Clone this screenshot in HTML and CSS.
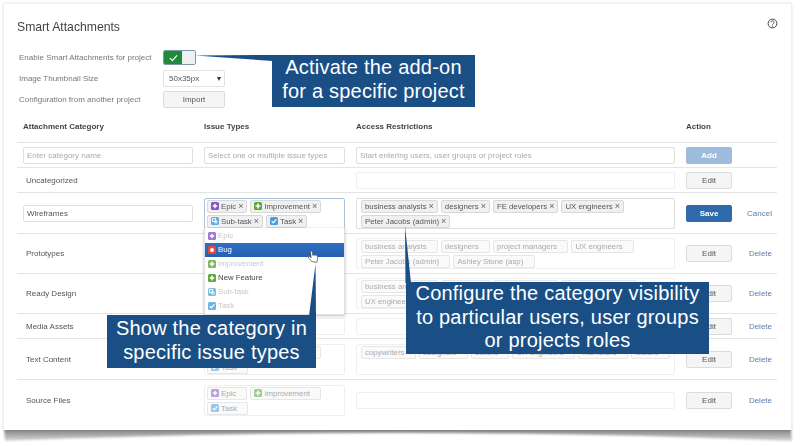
FILE: index.html
```html
<!DOCTYPE html>
<html lang="en">
<head>
<meta charset="utf-8">
<title>Smart Attachments</title>
<link rel="stylesheet" href="styles.css">
</head>
<body>
<svg class="defs" width="0" height="0" aria-hidden="true">
  <symbol id="i-epic" viewBox="0 0 8 8"><rect width="8" height="8" rx="1.5" fill="#8a55c8"/><path d="M4 1.8v4.4M1.8 4h4.4" stroke="#fff" stroke-width="1.4"/></symbol>
  <symbol id="i-bug" viewBox="0 0 8 8"><rect width="8" height="8" rx="1.5" fill="#e5493a"/><circle cx="4" cy="4" r="1.9" fill="#fff"/></symbol>
  <symbol id="i-plus" viewBox="0 0 8 8"><rect width="8" height="8" rx="1.5" fill="#5aa83c"/><path d="M4 1.6v4.8M1.6 4h4.8" stroke="#fff" stroke-width="1.5"/></symbol>
  <symbol id="i-sub" viewBox="0 0 8 8"><rect width="8" height="8" rx="1.5" fill="#5aaee0"/><rect x="1.6" y="1.6" width="3" height="3" fill="none" stroke="#fff" stroke-width=".9"/><rect x="3.4" y="3.4" width="3" height="3" fill="#fff" opacity=".75"/></symbol>
  <symbol id="i-task" viewBox="0 0 8 8"><rect width="8" height="8" rx="1.5" fill="#4a9fe0"/><path d="M1.7 4.2l1.6 1.6 3-3.4" fill="none" stroke="#fff" stroke-width="1.2"/></symbol>
</svg>
<div class="shot">
  <svg class="edge-shadow" width="800" height="446" viewBox="0 0 800 446" aria-hidden="true">
    <defs>
      <linearGradient id="edge" x1="0" y1="0" x2="0" y2="1"><stop offset="0" stop-color="#777"/><stop offset="1" stop-color="#d8d8d8"/></linearGradient>
      <filter id="soft"><feGaussianBlur stdDeviation="1"/></filter>
    </defs>
    <path d="M4 428H791L792 441Q600 433 400 433T5 441Z" fill="url(#edge)" filter="url(#soft)"/>
  </svg>
  <main class="card">
    <header class="title-row">
      <h1 class="title">Smart Attachments</h1>
      <svg class="help" width="11" height="11" viewBox="0 0 11 11" aria-hidden="true"><circle cx="5.5" cy="5.5" r="4.4" fill="none" stroke="#444" stroke-width="1"/><path d="M3.9 4.4a1.6 1.6 0 1 1 2.5 1.3c-.6.4-.9.6-.9 1.1" fill="none" stroke="#444" stroke-width=".9"/><circle cx="5.5" cy="8.1" r=".6" fill="#444"/></svg>
    </header>
    <section class="settings">
      <div class="setting">
        <span class="setting-label">Enable Smart Attachments for project</span>
        <div class="toggle">
          <span class="toggle-on"><svg width="9" height="8" viewBox="0 0 9 8" aria-hidden="true"><path d="M1 4.2l2.4 2.4L8 1.4" fill="none" stroke="#fff" stroke-width="1.2"/></svg></span>
          <span class="toggle-off"></span>
        </div>
      </div>
      <div class="setting">
        <span class="setting-label">Image Thumbnail Size</span>
        <div class="select"><span>50x35px</span><span class="select-arrow">▾</span></div>
      </div>
      <div class="setting">
        <span class="setting-label">Configuration from another project</span>
        <button class="btn btn-wide">Import</button>
      </div>
    </section>

    <section class="table">
      <div class="row row-head">
        <span>Attachment Category</span><span>Issue Types</span><span>Access Restrictions</span><span>Action</span>
      </div>

      <div class="row row-short">
        <input class="field" placeholder="Enter category name">
        <input class="field" placeholder="Select one or multiple issue types">
        <input class="field" placeholder="Start entering users, user groups or project roles">
        <button class="btn btn-add">Add</button>
      </div>

      <div class="row row-short">
        <span class="name">Uncategorized</span>
        <span></span>
        <div class="field field-off"></div>
        <button class="btn">Edit</button>
      </div>

      <div class="row row-wide">
        <input class="field" value="Wireframes">
        <div class="tags tags-issue tags-focus">
          <span class="tag"><svg class="ico"><use href="#i-epic"/></svg>Epic<span class="tag-x">×</span></span>
          <span class="tag"><svg class="ico"><use href="#i-plus"/></svg>Improvement<span class="tag-x">×</span></span>
          <span class="tag"><svg class="ico"><use href="#i-sub"/></svg>Sub-task<span class="tag-x">×</span></span>
          <span class="tag"><svg class="ico"><use href="#i-task"/></svg>Task<span class="tag-x">×</span></span>
          <ul class="dropdown">
            <li class="opt opt-off"><svg class="ico"><use href="#i-epic"/></svg>Epic</li>
            <li class="opt opt-active"><svg class="ico"><use href="#i-bug"/></svg>Bug</li>
            <li class="opt opt-off"><svg class="ico"><use href="#i-plus"/></svg>Improvement</li>
            <li class="opt"><svg class="ico"><use href="#i-plus"/></svg>New Feature</li>
            <li class="opt opt-off"><svg class="ico"><use href="#i-sub"/></svg>Sub-task</li>
            <li class="opt opt-off"><svg class="ico"><use href="#i-task"/></svg>Task</li>
          </ul>
        </div>
        <div class="tags tags-active">
          <span class="tag">business analysts<span class="tag-x">×</span></span>
          <span class="tag">designers<span class="tag-x">×</span></span>
          <span class="tag">FE developers<span class="tag-x">×</span></span>
          <span class="tag">UX engineers<span class="tag-x">×</span></span>
          <span class="tag">Peter Jacobs (admin)<span class="tag-x">×</span></span>
        </div>
        <button class="btn btn-save">Save</button>
        <a class="link">Cancel</a>
      </div>

      <div class="row row-tall">
        <span class="name">Prototypes</span>
        <span></span>
        <div class="tags">
          <span class="tag">business analysts<span class="tag-x">×</span></span>
          <span class="tag">designers<span class="tag-x">×</span></span>
          <span class="tag">project managers<span class="tag-x">×</span></span>
          <span class="tag">UX engineers<span class="tag-x">×</span></span>
          <span class="tag">Peter Jacobs (admin)<span class="tag-x">×</span></span>
          <span class="tag">Ashley Stone (asp)<span class="tag-x">×</span></span>
        </div>
        <button class="btn">Edit</button>
        <a class="link">Delete</a>
      </div>

      <div class="row row-tall">
        <span class="name">Ready Design</span>
        <span></span>
        <div class="tags">
          <span class="tag">business analysts<span class="tag-x">×</span></span>
          <span class="tag">designers<span class="tag-x">×</span></span>
          <span class="tag">FE developers<span class="tag-x">×</span></span>
          <span class="tag">project managers<span class="tag-x">×</span></span>
          <span class="tag">UX engineers<span class="tag-x">×</span></span>
        </div>
        <button class="btn">Edit</button>
        <a class="link">Delete</a>
      </div>

      <div class="row row-short">
        <span class="name">Media Assets</span>
        <div class="field field-off"></div>
        <div class="field field-off"></div>
        <button class="btn">Edit</button>
        <a class="link">Delete</a>
      </div>

      <div class="row row-wide">
        <span class="name">Text Content</span>
        <div class="tags tags-issue">
          <span class="tag"><svg class="ico"><use href="#i-epic"/></svg>Epic<span class="tag-x">×</span></span>
          <span class="tag"><svg class="ico"><use href="#i-plus"/></svg>Improvement<span class="tag-x">×</span></span>
          <span class="tag"><svg class="ico"><use href="#i-task"/></svg>Task<span class="tag-x">×</span></span>
        </div>
        <div class="tags">
          <span class="tag">copywriters<span class="tag-x">×</span></span>
          <span class="tag">designers<span class="tag-x">×</span></span>
          <span class="tag">editors<span class="tag-x">×</span></span>
          <span class="tag">UX engineers<span class="tag-x">×</span></span>
          <span class="tag">marketers<span class="tag-x">×</span></span>
          <span class="tag">testers<span class="tag-x">×</span></span>
        </div>
        <button class="btn">Edit</button>
        <a class="link">Delete</a>
      </div>

      <div class="row row-wide">
        <span class="name">Source Files</span>
        <div class="tags tags-issue">
          <span class="tag"><svg class="ico"><use href="#i-epic"/></svg>Epic<span class="tag-x">×</span></span>
          <span class="tag"><svg class="ico"><use href="#i-plus"/></svg>Improvement<span class="tag-x">×</span></span>
          <span class="tag"><svg class="ico"><use href="#i-task"/></svg>Task<span class="tag-x">×</span></span>
        </div>
        <div class="field field-off"></div>
        <button class="btn">Edit</button>
        <a class="link">Delete</a>
      </div>
    </section>
  </main>

  <svg class="connectors" width="800" height="446" viewBox="0 0 800 446" aria-hidden="true">
    <path d="M195 55.5L273 55V61Z" fill="#1a4f86"/>
    <path d="M315.5 264L316 316H309Z" fill="#1a4f86"/>
    <path d="M405 226L411 283H405.500Z" fill="#1a4f86"/>
    <path d="M311.500 261.500c-1-1.500-2.500-3-3-4-.6-1.200.8-1.700 1.600-.8l1 1.100-.6-5.600c-.1-1.300 1.700-1.500 1.900-.2l.5 3.400c.1-1 1.600-1 1.700 0 .2-.8 1.500-.8 1.600.1.300-.6 1.400-.4 1.400.5 0 2.500 0 4-.9 6.500Z" fill="#fff" stroke="#444" stroke-width=".7"/>
  </svg>
  <div class="callout callout-addon">Activate the add-on<br>for a specific project</div>
  <div class="callout callout-types">Show the category in<br>specific issue types</div>
  <div class="callout callout-access">Configure the category visibility<br>to particular users, user groups<br>or projects roles</div>
</div>
</body>
</html>
```

FILE: styles.css
```css
* { box-sizing: border-box; }
html, body { margin: 0; padding: 0; background: #fff; }
body { font-family: "Liberation Sans", Arial, sans-serif; color: #555; font-size: 8px; overflow: hidden; }
.defs { position: absolute; }

.shot { position: relative; width: 800px; height: 446px; overflow: hidden; padding: 3px 0 0 3px; filter: blur(.35px); }
.edge-shadow, .connectors { position: absolute; left: 0; top: 0; }
.connectors { z-index: 4; }

.card {
  position: relative;
  width: 789px;
  height: 427px;
  padding: 13px 14px 0 13px;
  background: #fff;
  border: 1px solid #efefef;
  border-bottom: 0;
  box-shadow: 0 0 3px rgba(0,0,0,.1);
}

.title-row { display: flex; justify-content: space-between; align-items: flex-start; height: 18px; }
.title { margin: 3px 0 0; font-size: 12.2px; line-height: 14px; font-weight: 400; color: #444; }
.help { margin: 1px -1px 0 0; }

.settings { display: flex; flex-direction: column; margin-top: 12px; }
.setting { display: flex; align-items: center; height: 21px; padding-left: 2px; }
.setting-label { width: 144px; color: #777; }

.toggle { display: flex; width: 33px; height: 15px; border-radius: 2px; overflow: hidden; border: 1px solid #7d97ad; }
.toggle-on { display: flex; align-items: center; justify-content: center; width: 18px; background: #1f8a3a; }
.toggle-off { flex: 1; background: #eef1f4; }

.select {
  display: flex; align-items: center; justify-content: space-between;
  width: 62px; height: 17px; padding: 0 3px 0 5px;
  background: #fff; border: 1px solid #e2e2e2; border-radius: 2px; color: #555;
}
.select-arrow { font-size: 8px; color: #333; }

.btn {
  width: 46px; height: 17px; padding: 0; font: inherit; color: #555; text-align: center;
  background: #f5f5f5; border: 1px solid #dcdcdc; border-radius: 2px;
}
.btn-wide { width: 62px; }
.btn-add { background: #9dbbdb; border-color: #9dbbdb; color: #fff; font-weight: 700; }
.btn-save { background: #2f6bab; border-color: #2f6bab; color: #fff; font-weight: 700; }

.table { margin-top: 1px; }
.row {
  display: grid;
  grid-template-columns: 170px 141px 319px 46px 1fr;
  column-gap: 11px;
  align-items: center;
  padding: 0 5px 0 6px;
  border-top: 1px solid #e4e4e4;
}
.row-head { height: 31px; border-top: 0; font-weight: 700; color: #444; }
.row-short { height: 25px; }
.row-tall { height: 40px; }
.row-wide { height: 41px; }

.name { padding-left: 3px; color: #555; }
.link { justify-self: end; color: #5b7dab; }

.field {
  width: 100%; height: 17px; padding: 0 3px; font: inherit; color: #555;
  background: #fff; border: 1px solid #dedede; border-radius: 2px; outline: 0;
}
.field::placeholder { color: #aaa; opacity: 1; }
.field-off { border-color: #efefef; }

.tags {
  position: relative;
  display: flex; flex-wrap: wrap; align-content: flex-start; gap: 2px 3px;
  height: 31px; padding: 1px 3px 1px 4px; font-size: 7.8px;
  background: #fff; border: 1px solid #efefef; border-radius: 2px;
}
.tags-issue { padding-left: 2px; }
.tags-focus { border-color: #a9c3de; z-index: 2; }
.tags-active { border-color: #dedede; }

.tag {
  display: inline-flex; align-items: center; height: 13px; padding: 0 3px; white-space: nowrap;
  color: #aaa; background: #fafafa; border: 1px solid #e6e6e6; border-radius: 2px;
}
.tag .ico { opacity: .55; }
.tag-x { margin-left: 2px; font-size: 9px; color: #666; visibility: hidden; }
.tags-focus .tag, .tags-active .tag { color: #555; background: #f0f0f0; border-color: #d8d8d8; }
.tags-focus .tag .ico { opacity: 1; }
.tags-focus .tag-x, .tags-active .tag-x { visibility: visible; }

.ico { flex: none; width: 8px; height: 8px; margin-right: 2px; }

.dropdown {
  position: absolute; left: -1px; right: -1px; top: 100%; z-index: 3;
  margin: 0; padding: 1px 0 1px; list-style: none;
  background: #fff; border: 1px solid #e0e0e0; border-top: 0;
  box-shadow: 0 1px 3px rgba(0,0,0,.25);
}
.opt { display: flex; align-items: center; height: 14px; padding-left: 3px; font-size: 7.8px; color: #444; }
.opt-off { color: #c8c8c8; }
.opt-off .ico { opacity: .8; }
.opt-active { color: #fff; background: linear-gradient(#2f70c4, #2560b0); }

.callout {
  position: absolute; z-index: 5;
  display: flex; align-items: center; justify-content: center; text-align: center;
  color: #fff; background: #1a4f86; font-size: 20px; line-height: 23.500px; letter-spacing: .22px;
}
.callout-addon { left: 272px; top: 55px; width: 203px; height: 52px; padding-bottom: 3px; }
.callout-types { left: 107px; top: 315px; width: 209px; height: 53px; padding-bottom: 2px; }
.callout-access { left: 406px; top: 282px; width: 303px; height: 72px; padding-bottom: 1px; }
```
